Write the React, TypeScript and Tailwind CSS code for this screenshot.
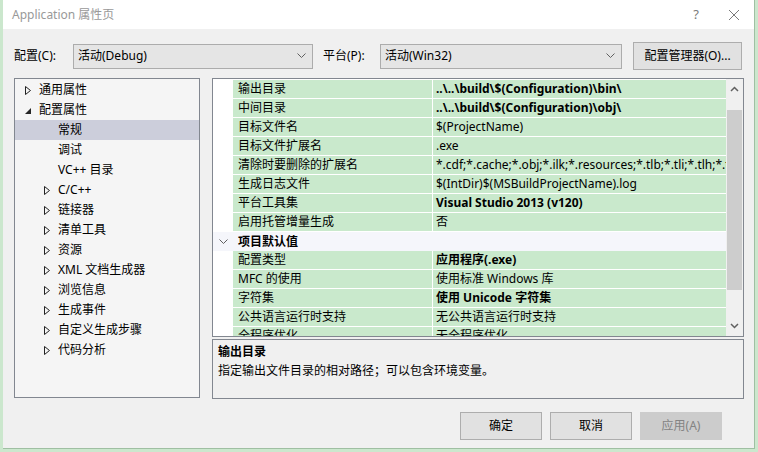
import React from 'react';

const font = { fontFamily: '"Noto Sans", "Noto Sans CJK SC", sans-serif' };

interface Prop {
  name: string;
  value: string;
  bold?: boolean;
}

const general: Prop[] = [
  { name: '输出目录', value: '..\\..\\build\\$(Configuration)\\bin\\', bold: true },
  { name: '中间目录', value: '..\\..\\build\\$(Configuration)\\obj\\', bold: true },
  { name: '目标文件名', value: '$(ProjectName)' },
  { name: '目标文件扩展名', value: '.exe' },
  { name: '清除时要删除的扩展名', value: '*.cdf;*.cache;*.obj;*.ilk;*.resources;*.tlb;*.tli;*.tlh;*.tmp;*.rsp' },
  { name: '生成日志文件', value: '$(IntDir)$(MSBuildProjectName).log' },
  { name: '平台工具集', value: 'Visual Studio 2013 (v120)', bold: true },
  { name: '启用托管增量生成', value: '否' },
];

const defaults: Prop[] = [
  { name: '配置类型', value: '应用程序(.exe)', bold: true },
  { name: 'MFC 的使用', value: '使用标准 Windows 库' },
  { name: '字符集', value: '使用 Unicode 字符集', bold: true },
  { name: '公共语言运行时支持', value: '无公共语言运行时支持' },
  { name: '全程序优化', value: '无全程序优化' },
];

interface TreeItem {
  label: string;
  level: 1 | 2;
  arrow?: 'closed' | 'open';
  selected?: boolean;
}

const tree: TreeItem[] = [
  { label: '通用属性', level: 1, arrow: 'closed' },
  { label: '配置属性', level: 1, arrow: 'open' },
  { label: '常规', level: 2, selected: true },
  { label: '调试', level: 2 },
  { label: 'VC++ 目录', level: 2 },
  { label: 'C/C++', level: 2, arrow: 'closed' },
  { label: '链接器', level: 2, arrow: 'closed' },
  { label: '清单工具', level: 2, arrow: 'closed' },
  { label: '资源', level: 2, arrow: 'closed' },
  { label: 'XML 文档生成器', level: 2, arrow: 'closed' },
  { label: '浏览信息', level: 2, arrow: 'closed' },
  { label: '生成事件', level: 2, arrow: 'closed' },
  { label: '自定义生成步骤', level: 2, arrow: 'closed' },
  { label: '代码分析', level: 2, arrow: 'closed' },
];

const Chevron = () => (
  <svg width="9" height="6" viewBox="0 0 9 6" className="shrink-0">
    <polyline points="0.5,0.5 4.5,4.5 8.5,0.5" fill="none" stroke="#606060" strokeWidth="1" />
  </svg>
);

const Combo = ({ text, w }: { text: string; w: string }) => (
  <div className={`${w} h-[25px] flex items-center justify-between bg-[#e5e5e5] border border-[#acacac] pl-[4px] pr-[6px] text-[12px] text-black`}>
    <span>{text}</span>
    <Chevron />
  </div>
);

const Arrow = ({ kind }: { kind?: 'closed' | 'open' }) => {
  if (kind === 'closed')
    return (
      <svg width="6" height="9" viewBox="0 0 6 9" className="shrink-0">
        <polygon points="0.5,0.5 5.5,4.5 0.5,8.5" fill="none" stroke="#222" strokeWidth="1" />
      </svg>
    );
  if (kind === 'open')
    return (
      <svg width="6" height="9" viewBox="0 0 6 9" className="shrink-0">
        <polygon points="6,2 6,8 0,8" fill="#262626" />
      </svg>
    );
  return <span className="w-[6px] shrink-0" />;
};

const PropRow = ({ p }: { p: Prop }) => (
  <div className="flex h-[19px] shrink-0">
    <div className="w-[20px] shrink-0 bg-white" />
    <div className="w-[200px] shrink-0 bg-[#c9e9cc] border-b border-r border-white pl-[5px] leading-[18px] text-[12px] text-black whitespace-nowrap overflow-hidden">
      {p.name}
    </div>
    <div className={`flex-1 min-w-0 bg-[#c9e9cc] border-b border-white pl-[3px] leading-[18px] text-[12px] text-black whitespace-nowrap overflow-hidden ${p.bold ? 'font-bold' : ''}`}>
      {p.value}
    </div>
  </div>
);

const Button = ({ label, disabled }: { label: string; disabled?: boolean }) => (
  <div
    className={`w-[82px] h-[28px] flex items-center justify-center text-[12px] border ${
      disabled ? 'bg-[#cccccc] border-[#cccccc] text-[#838383]' : 'bg-[#e1e1e1] border-[#adadad] text-black'
    }`}
  >
    {label}
  </div>
);

export default function App() {
  return (
    <div className="w-[758px] h-[452px] bg-[#cbe7cd] overflow-hidden" style={font}>
      <div className="ml-[3px] w-[752px] h-[449px] flex flex-col border-r border-b border-[#9fbfa2] bg-[#f0f0f0]">
        {/* Title bar */}
        <div className="h-[29px] shrink-0 bg-white flex items-center pl-[9px] pr-[14px] text-[12px] text-[#999999]">
          <span className="flex-1">Application 属性页</span>
          <span className="w-[20px] text-center text-[13px] text-[#7a7a7a]">?</span>
          <svg width="12" height="12" viewBox="0 0 12 12" className="ml-[22px]">
            <path d="M1 1 L11 11 M11 1 L1 11" stroke="#7a7a7a" strokeWidth="1" />
          </svg>
        </div>

        {/* Config row */}
        <div className="flex items-center pl-[11px] pt-[13px] h-[41px] shrink-0 text-[12px] text-black">
          <span className="w-[59px]">配置(C):</span>
          <Combo text="活动(Debug)" w="w-[240px]" />
          <span className="ml-[10px] w-[57px]">平台(P):</span>
          <Combo text="活动(Win32)" w="w-[242px]" />
          <div className="ml-[11px] w-[109px] h-[28px] flex items-center justify-center bg-[#e1e1e1] border border-[#adadad]">
            配置管理器(O)...
          </div>
        </div>

        {/* Main */}
        <div className="flex mt-[8px] pl-[11px] shrink-0">
          {/* Tree */}
          <div className="w-[186px] h-[320px] border border-[#828790] bg-[#f5f5f5] pt-[1px] flex flex-col">
            {tree.map((t) => (
              <div
                key={t.label}
                className={`h-[20px] flex items-center text-[12px] text-black ${t.selected ? 'bg-[#cccedb]' : ''} ${
                  t.level === 1 ? 'pl-[10px]' : 'pl-[29px]'
                }`}
              >
                <Arrow kind={t.arrow} />
                <span className="ml-[8px] whitespace-nowrap">{t.label}</span>
              </div>
            ))}
          </div>

          {/* Right column */}
          <div className="ml-[12px] w-[532px] flex flex-col">
            <div className="h-[259px] border border-[#828790] bg-white flex overflow-hidden">
              <div className="flex-1 min-w-0 flex flex-col pt-[1px] overflow-hidden">
                {general.map((p) => (
                  <PropRow key={p.name} p={p} />
                ))}
                <div className="h-[19px] shrink-0 flex items-center bg-[#f5f6fb] text-[12px] font-bold text-black">
                  <span className="w-[20px] flex justify-center">
                    <Chevron />
                  </span>
                  <span className="pl-[5px]">项目默认值</span>
                </div>
                {defaults.map((p) => (
                  <PropRow key={p.name} p={p} />
                ))}
              </div>
              {/* Scrollbar */}
              <div className="w-[17px] shrink-0 bg-[#f0f0f0] flex flex-col items-center">
                <div className="h-[20px] flex items-center justify-center">
                  <svg width="9" height="6" viewBox="0 0 9 6">
                    <polyline points="1,5 4.5,1.5 8,5" fill="none" stroke="#606060" strokeWidth="1.5" />
                  </svg>
                </div>
                <div className="mt-[11px] w-[15px] h-[180px] bg-[#cdcdcd]" />
                <div className="flex-1" />
                <div className="h-[20px] flex items-center justify-center">
                  <svg width="9" height="6" viewBox="0 0 9 6">
                    <polyline points="1,1 4.5,4.5 8,1" fill="none" stroke="#606060" strokeWidth="1.5" />
                  </svg>
                </div>
              </div>
            </div>
            <div className="mt-[2px] h-[60px] border border-[#828790] bg-[#f0f0f0] pl-[5px] pt-[2px] text-[12px] text-black">
              <div className="font-bold leading-[19px]">输出目录</div>
              <div className="leading-[19px]">指定输出文件目录的相对路径；可以包含环境变量。</div>
            </div>
          </div>
        </div>

        {/* Buttons */}
        <div className="flex justify-end gap-[8px] mt-[13px] pr-[32px]">
          <Button label="确定" />
          <Button label="取消" />
          <Button label="应用(A)" disabled />
        </div>
      </div>
    </div>
  );
}
